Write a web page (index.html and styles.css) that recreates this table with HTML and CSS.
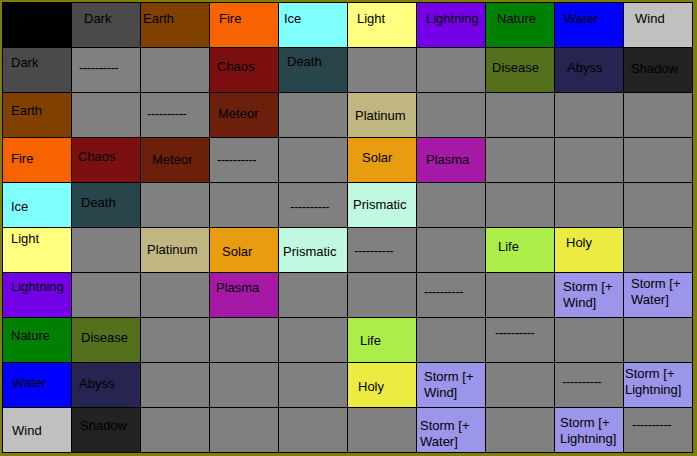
FILE: index.html
```html
<!DOCTYPE html>
<html>
<head>
<meta charset="utf-8">
<link rel="stylesheet" href="styles.css">
</head>
<body>
<div class="grid">
  <div class="c k"></div>
  <div class="c dk x12 y8">Dark</div>
  <div class="c ea x2 y8">Earth</div>
  <div class="c fi x9 y8">Fire</div>
  <div class="c ic x5 y8">Ice</div>
  <div class="c li x9 y8">Light</div>
  <div class="c lt x9 y8">Lightning</div>
  <div class="c na x11 y8">Nature</div>
  <div class="c wa x9 y8">Water</div>
  <div class="c wi x11 y8">Wind</div>

  <div class="c dk x8 y7">Dark</div>
  <div class="c g x7 y12 dash">----------</div>
  <div class="c g"></div>
  <div class="c ch x7 y11">Chaos</div>
  <div class="c de x8 y6">Death</div>
  <div class="c g"></div>
  <div class="c g"></div>
  <div class="c di x6 y12">Disease</div>
  <div class="c ab x12 y12">Abyss</div>
  <div class="c sh x7 y13">Shadow</div>

  <div class="c ea x8 y10">Earth</div>
  <div class="c g"></div>
  <div class="c g x6 y13 dash">----------</div>
  <div class="c me x8 y13">Meteor</div>
  <div class="c g"></div>
  <div class="c pl x7 y15">Platinum</div>
  <div class="c g"></div>
  <div class="c g"></div>
  <div class="c g"></div>
  <div class="c g"></div>

  <div class="c fi x8 y13">Fire</div>
  <div class="c ch x6 y11">Chaos</div>
  <div class="c me x11 y14">Meteor</div>
  <div class="c g x7 y14 dash">----------</div>
  <div class="c g"></div>
  <div class="c so x14 y12">Solar</div>
  <div class="c pm x9 y14">Plasma</div>
  <div class="c g"></div>
  <div class="c g"></div>
  <div class="c g"></div>

  <div class="c ic x8 y16">Ice</div>
  <div class="c de x9 y12">Death</div>
  <div class="c g"></div>
  <div class="c g"></div>
  <div class="c g x11 y16 dash">----------</div>
  <div class="c pr x5 y14">Prismatic</div>
  <div class="c g"></div>
  <div class="c g"></div>
  <div class="c g"></div>
  <div class="c g"></div>

  <div class="c li x8 y3">Light</div>
  <div class="c g"></div>
  <div class="c pl x6 y14">Platinum</div>
  <div class="c so x12 y16">Solar</div>
  <div class="c pr x4 y16">Prismatic</div>
  <div class="c g x6 y15 dash">----------</div>
  <div class="c g"></div>
  <div class="c lf x12 y11">Life</div>
  <div class="c ho x11 y7">Holy</div>
  <div class="c g"></div>

  <div class="c lt x8 y6">Lightning</div>
  <div class="c g"></div>
  <div class="c g"></div>
  <div class="c pm x6 y7">Plasma</div>
  <div class="c g"></div>
  <div class="c g"></div>
  <div class="c g x7 y11 dash">----------</div>
  <div class="c g"></div>
  <div class="c st x8 y6">Storm [+<br>Wind]</div>
  <div class="c st x7 y3">Storm [+<br>Water]</div>

  <div class="c na x8 y10">Nature</div>
  <div class="c di x9 y12">Disease</div>
  <div class="c g"></div>
  <div class="c g"></div>
  <div class="c g"></div>
  <div class="c lf x12 y15">Life</div>
  <div class="c g"></div>
  <div class="c g x9 y7 dash">----------</div>
  <div class="c g"></div>
  <div class="c g"></div>

  <div class="c wa x9 y12">Water</div>
  <div class="c ab x7 y13">Abyss</div>
  <div class="c g"></div>
  <div class="c g"></div>
  <div class="c g"></div>
  <div class="c ho x10 y16">Holy</div>
  <div class="c st x7 y6">Storm [+<br>Wind]</div>
  <div class="c g"></div>
  <div class="c g x7 y11 dash">----------</div>
  <div class="c st x1 y3">Storm [+<br>Lightning]</div>

  <div class="c wi x9 y15">Wind</div>
  <div class="c sh x8 y10">Shadow</div>
  <div class="c g"></div>
  <div class="c g"></div>
  <div class="c g"></div>
  <div class="c g"></div>
  <div class="c st x3 y10">Storm [+<br>Water]</div>
  <div class="c g"></div>
  <div class="c st x5 y7">Storm [+<br>Lightning]</div>
  <div class="c g x8 y9 dash">----------</div>
</div>
</body>
</html>
```

FILE: styles.css
```css
html, body {
  margin: 0;
  padding: 0;
  background: #808000;
}
body {
  padding: 2px 0 0 2px;
  width: 697px;
  height: 456px;
  box-sizing: border-box;
  overflow: hidden;
  font-family: "Liberation Sans", Arial, sans-serif;
  font-size: 13px;
  line-height: 16px;
  color: #000;
}
.grid {
  display: grid;
  grid-template-columns: repeat(10, 68px);
  grid-auto-rows: 44px;
  gap: 1px;
  padding: 1px;
  background: #000;
  width: max-content;
}
.c {
  box-sizing: border-box;
  overflow: hidden;
  white-space: nowrap;
}
.dash { letter-spacing: -0.4px; }

/* colours */
.k  { background: #000000; }
.dk { background: #4a4a4a; }
.ea { background: #804000; }
.fi { background: #f76300; }
.ic { background: #80ffff; }
.li { background: #ffff80; }
.lt { background: #7300e6; }
.na { background: #008000; }
.wa { background: #0000ff; }
.wi { background: #c0c0c0; }
.g  { background: #808080; }
.ch { background: #7c1010; }
.de { background: #27454a; }
.di { background: #55701c; }
.ab { background: #262552; }
.sh { background: #222222; }
.me { background: #6c200c; }
.pl { background: #c0b67f; }
.so { background: #e89c10; }
.pm { background: #a619a6; }
.pr { background: #c0f9df; }
.lf { background: #acee49; }
.ho { background: #ebeb42; }
.st { background: #9c96eb; }

/* text offsets */
.x1 { padding-left: 1px; }
.x2 { padding-left: 2px; }
.x3 { padding-left: 3px; }
.x4 { padding-left: 4px; }
.x5 { padding-left: 5px; }
.x6 { padding-left: 6px; }
.x7 { padding-left: 7px; }
.x8 { padding-left: 8px; }
.x9 { padding-left: 9px; }
.x10 { padding-left: 10px; }
.x11 { padding-left: 11px; }
.x12 { padding-left: 12px; }
.x14 { padding-left: 14px; }

.y3 { padding-top: 3px; }
.y6 { padding-top: 6px; }
.y7 { padding-top: 7px; }
.y8 { padding-top: 8px; }
.y9 { padding-top: 9px; }
.y10 { padding-top: 10px; }
.y11 { padding-top: 11px; }
.y12 { padding-top: 12px; }
.y13 { padding-top: 13px; }
.y14 { padding-top: 14px; }
.y15 { padding-top: 15px; }
.y16 { padding-top: 16px; }
```
